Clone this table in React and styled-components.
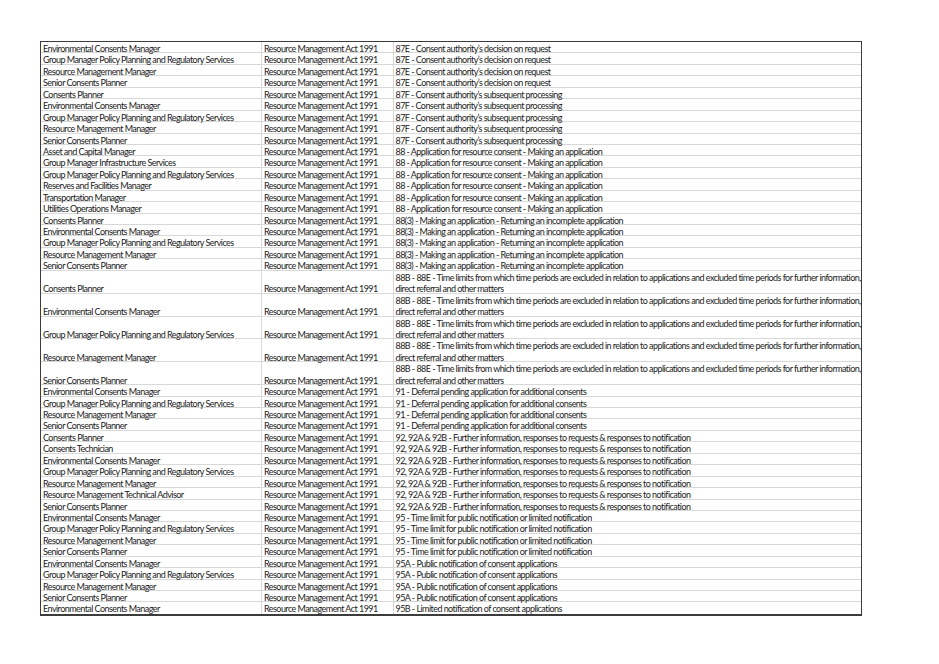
import React from 'react'
import styled, {createGlobalStyle} from 'styled-components'

const R = 'Resource Management Act 1991'
const ECM = 'Environmental Consents Manager'
const GM = 'Group Manager Policy Planning and Regulatory Services'
const RMM = 'Resource Management Manager'
const SCP = 'Senior Consents Planner'
const CP = 'Consents Planner'

const S87E = '87E - Consent authority’s decision on request'
const S87F = '87F - Consent authority’s subsequent processing'
const S88 = '88 - Application for resource consent - Making an application'
const S883 = '88(3) - Making an application - Returning an incomplete application'
const S88B = [
    '88B - 88E - Time limits from which time periods are excluded in relation to applications and excluded time periods for further information,',
    'direct referral and other matters'
]
const S91 = '91 - Deferral pending application for additional consents'
const S92 = '92, 92A & 92B - Further information, responses to requests & responses to notification'
const S95 = '95 - Time limit for public notification or limited notification'
const S95A = '95A - Public notification of consent applications'
const S95B = '95B - Limited notification of consent applications'

const rows = [
    [ECM, S87E], [GM, S87E], [RMM, S87E], [SCP, S87E],
    [CP, S87F], [ECM, S87F], [GM, S87F], [RMM, S87F], [SCP, S87F],
    ['Asset and Capital Manager', S88], ['Group Manager Infrastructure Services', S88], [GM, S88],
    ['Reserves and Facilities Manager', S88], ['Transportation Manager', S88], ['Utilities Operations Manager', S88],
    [CP, S883], [ECM, S883], [GM, S883], [RMM, S883], [SCP, S883],
    [CP, S88B], [ECM, S88B], [GM, S88B], [RMM, S88B], [SCP, S88B],
    [ECM, S91], [GM, S91], [RMM, S91], [SCP, S91],
    [CP, S92], ['Consents Technician', S92], [ECM, S92], [GM, S92], [RMM, S92],
    ['Resource Management Technical Advisor', S92], [SCP, S92],
    [ECM, S95], [GM, S95], [RMM, S95], [SCP, S95],
    [ECM, S95A], [GM, S95A], [RMM, S95A], [SCP, S95A],
    [ECM, S95B],
]

const LINE = 11.44

const App = () => {
    return (
        <>
            <GlobalStyle/>
            <Page>
                <Sheet>
                    {rows.map(([role, section], i) => {
                        const lines = Array.isArray(section) ? section : [section]
                        return (
                            <Row key={i} $lines={lines.length}>
                                <Cell><Line>{role}</Line></Cell>
                                <Cell><Line>{R}</Line></Cell>
                                <Cell $last>
                                    {lines.map((l, j) => <Line key={j}>{l}</Line>)}
                                </Cell>
                            </Row>
                        )
                    })}
                </Sheet>
            </Page>
        </>
    )
}

export default App

const GlobalStyle = createGlobalStyle`
  body {
    margin: 0;
    background: #ffffff;
  }
`

const Page = styled.div`
  padding: 41px 0 0 40px;
  font-family: Lato, "Liberation Sans", sans-serif;
  font-size: 9px;
  letter-spacing: -0.55px;
  color: #1a1a1a;
`

const Sheet = styled.div`
  width: 822px;
  box-sizing: border-box;
  border: 1.5px solid #3c3c3c;
  border-bottom-width: 2px;
  display: flex;
  flex-direction: column;
`

const Row = styled.div`
  display: grid;
  grid-template-columns: 221px 132px 1fr;
  height: ${p => p.$lines * LINE}px;
  box-sizing: border-box;
  border-bottom: 1px solid #d8d8d8;

  &:last-child {
    border-bottom: none;
  }
`

const Cell = styled.div`
  display: flex;
  flex-direction: column;
  justify-content: flex-end;
  padding-left: ${p => p.$last ? '1.5px' : '2px'};
  border-right: ${p => p.$last ? 'none' : '1px solid #d8d8d8'};
  white-space: nowrap;
`

const Line = styled.div`
  height: ${LINE}px;
  line-height: ${LINE}px;
  transform: translateY(0.5px);
`
